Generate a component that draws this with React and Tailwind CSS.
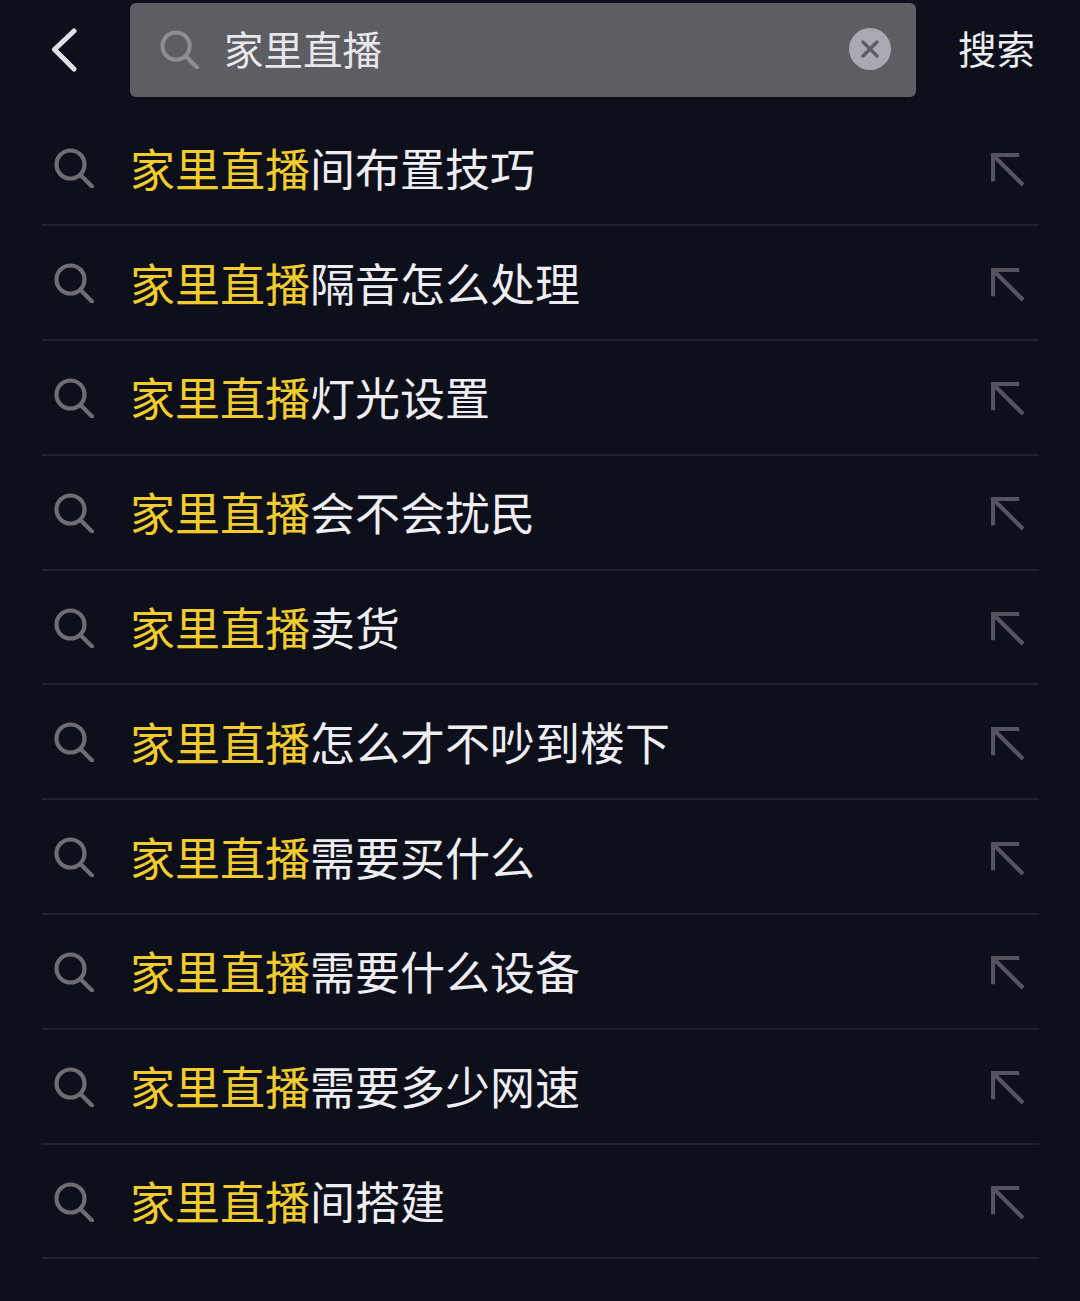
const items = ['间布置技巧','隔音怎么处理','灯光设置','会不会扰民','卖货','怎么才不吵到楼下','需要买什么','需要什么设备','需要多少网速','间搭建'];

function SearchIcon({ className, color }) {
  return (
    <svg className={className} viewBox="0 0 40 40" fill="none" stroke={color} strokeWidth="4.2" strokeLinecap="round">
      <circle cx="16.5" cy="16.5" r="14" />
      <path d="M27 27.5 L38 38.5" />
    </svg>
  );
}

export default function App() {
  return (
    <div className="w-[1080px] h-[1301px] overflow-hidden bg-[#0d0f1b] flex flex-col" style={{ fontFamily: '"Noto Sans CJK SC", sans-serif' }}>
      <div className="h-[111.5px] flex items-start pt-[3px]">
        <div className="w-[130px] h-[94px] flex items-center pl-[51px] shrink-0">
          <svg className="w-[26px] h-[44px]" viewBox="0 0 26 44" fill="none" stroke="#e0e0e4" strokeWidth="5" strokeLinecap="round" strokeLinejoin="round">
            <path d="M23 3 L3.5 21.5 L23 41" />
          </svg>
        </div>
        <div className="w-[786px] h-[94px] rounded-[6px] bg-[#5d5d64] flex items-center pl-[30px] pr-[25px] shrink-0">
          <SearchIcon className="w-[39px] h-[39px] shrink-0 -mt-[2px]" color="#8e8e95" />
          <span className="ml-[25px] text-[39.5px] leading-[94px] text-[#e8e8ec] -mt-[4px]">家里直播</span>
          <div className="ml-auto w-[42px] h-[42px] rounded-full bg-[#a9a9b1] flex items-center justify-center -mt-[2px]">
            <svg className="w-[20px] h-[20px]" viewBox="0 0 20 20" stroke="#5d5d64" strokeWidth="3.4" strokeLinecap="round">
              <path d="M3 3 L17 17 M17 3 L3 17" />
            </svg>
          </div>
        </div>
        <div className="ml-[42px] h-[94px] flex items-center text-[38.5px] text-[#ecedf0] whitespace-nowrap -mt-[2px]">搜索</div>
      </div>
      <div className="mx-[42px] w-[997px] flex flex-col">
        {items.map((t) => (
          <div key={t} className="h-[114.8px] border-b-2 border-[#20212d] flex items-center pl-[12px] pr-[13px]">
            <SearchIcon className="w-[40px] h-[40px] shrink-0 mt-[1px]" color="#6d6d74" />
            <div className="ml-[36px] text-[45px] leading-[60px] whitespace-nowrap text-[#eeeef2]">
              <span className="text-[#f2cc2c]">家里直播</span>{t}
            </div>
            <svg className="ml-auto w-[35px] h-[35px] shrink-0 mt-[5px]" viewBox="0 0 36 36" fill="none" stroke="#54545e" strokeWidth="4.4">
              <path d="M2 29 L2 2 L29 2" />
              <path d="M3 3 L33 33" />
            </svg>
          </div>
        ))}
      </div>
    </div>
  );
}
